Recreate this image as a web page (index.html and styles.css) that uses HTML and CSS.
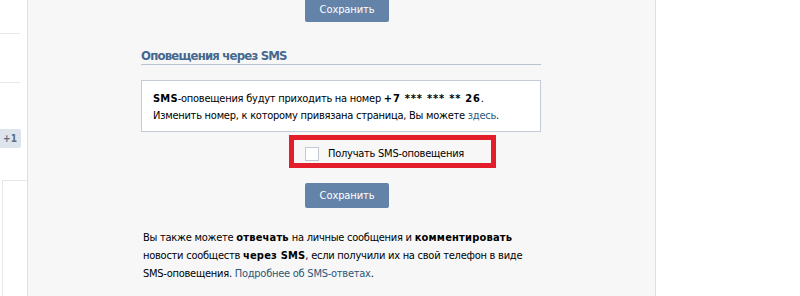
FILE: index.html
```html
<!DOCTYPE html>
<html lang="ru">
<head>
    <meta charset="UTF-8">
    <title>Оповещения через SMS</title>
    <link rel="stylesheet" href="styles.css">
</head>
<body>
<div class="page">

    <!-- левая колонка -->
    <aside class="side">
        <div class="side-row"></div>
        <div class="side-row second"></div>
        <span class="badge">+1</span>
        <div class="side-box"></div>
    </aside>

    <!-- настройки -->
    <main class="main">
        <div class="settings">
            <div class="row">
                <button class="btn top-btn">Сохранить</button>
            </div>

            <h2 class="section-title">Оповещения через SMS</h2>

            <div class="info">
                <div><b>SMS</b>-оповещения будут приходить на номер <b class="phone">+7 *** *** ** 26</b>.</div>
                <div>Изменить номер, к которому привязана страница, Вы можете <a href="#">здесь</a>.</div>
            </div>

            <div class="highlight">
                <label class="check-label">
                    <span class="check"></span>
                    Получать SMS-оповещения
                </label>
            </div>

            <div class="row">
                <button class="btn">Сохранить</button>
            </div>

            <p class="note">
                Вы также можете <b>отвечать</b> на личные сообщения и <b>комментировать</b><br>
                новости сообществ <b>через SMS</b>, если получили их на свой телефон в виде<br>
                SMS-оповещения. <a href="#">Подробнее об SMS-ответах</a>.
            </p>
        </div>
    </main>

    <div class="right"></div>
</div>
</body>
</html>
```

FILE: styles.css
```css
/* базовые */
html, body {
    margin: 0;
    padding: 0;
    height: 296px;
    overflow: hidden;
    background: #fff;
    font-family: Tahoma, "DejaVu Sans Condensed", "DejaVu Sans", sans-serif;
    font-stretch: condensed;
    font-size: 11px;
    letter-spacing: -0.25px;
    color: #000;
}
b {
    letter-spacing: 0.2px;
}
b.phone {
    letter-spacing: 0.8px;
}
a {
    color: #2b587a;
    text-decoration: none;
}
.page {
    display: flex;
    height: 296px;
}

/* левая колонка */
.side {
    width: 27px;
    flex: none;
}
.side-row {
    width: 20px;
    height: 33px;
    border-bottom: 1px solid #e7e8ec;
}
.side-row.second {
    height: 48px;
}
.badge {
    display: block;
    width: 21px;
    height: 19px;
    margin-top: 46px;
    background: #dee4eb;
    border-radius: 0 2px 2px 0;
    color: #5b6e84;
    font-weight: bold;
    font-size: 10px;
    letter-spacing: 0;
    line-height: 19px;
    text-align: center;
    box-sizing: border-box;
    padding-right: 1px;
}
.side-box {
    margin-top: 32px;
    margin-left: 2px;
    height: 140px;
    border-left: 1px solid #e4e6ea;
    border-top: 1px solid #e4e6ea;
}

/* основная колонка */
.main {
    width: 627px;
    flex: none;
    background: #f7f7f7;
    border-left: 1px solid #dcdfe5;
    border-right: 1px solid #dcdfe5;
}
.settings {
    width: 400px;
    margin-left: 113px;
}
.row {
    padding-left: 164px;
}
.btn {
    display: block;
    width: 84px;
    height: 25px;
    padding: 0;
    border: none;
    border-radius: 2px;
    background: #6383a8;
    color: #fff;
    font-family: inherit;
    font-stretch: condensed;
    font-size: 11px;
    letter-spacing: -0.1px;
}
.top-btn {
    margin-top: -3px;
}
.section-title {
    margin: 26px 0 0;
    padding: 0;
    font-size: 13px;
    line-height: 16px;
    letter-spacing: -0.8px;
    color: #45688e;
    border-bottom: 1px solid #b9c4d3;
}
.info {
    margin-top: 15px;
    padding: 9px 11px 7px;
    background: #fff;
    border: 1px solid #c5cbd6;
    line-height: 17px;
    white-space: nowrap;
}

/* красная рамка */
.highlight {
    width: 207px;
    height: 33px;
    margin: 3px 0 15px 148px;
    border: 5px solid #e41d2b;
    box-sizing: border-box;
    padding: 4px 0 0 11px;
}
.check-label {
    display: flex;
    align-items: center;
    gap: 9px;
    height: 19px;
}
.check {
    width: 14px;
    height: 14px;
    box-sizing: border-box;
    border: 1px solid #c3cad3;
    background: #fff;
}

.note {
    margin: 21px 0 0;
    padding-left: 2px;
    line-height: 18px;
    white-space: nowrap;
}

.right {
    flex: 1;
    background: #fff;
}
```
